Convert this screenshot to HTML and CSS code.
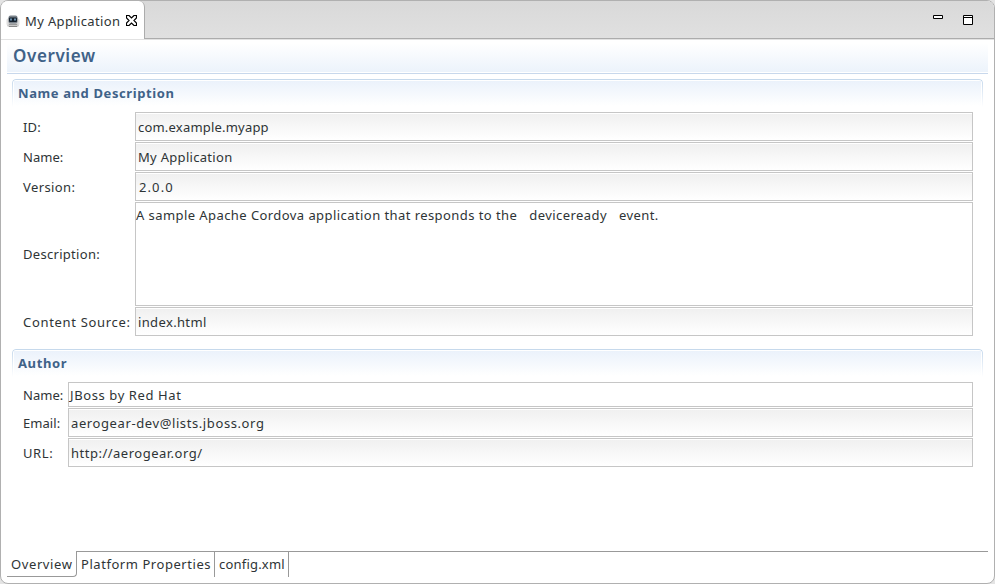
FILE: index.html
```
<!DOCTYPE html>
<html lang="en">
<head>
<meta charset="utf-8">
<title>My Application</title>
<link rel="stylesheet" href="styles.css">
</head>
<body>
<div class="window">
  <header class="tabbar">
    <div class="tab">
      <svg class="robot" width="14" height="14" viewBox="0 0 14 14"><rect x="1" y="4" width="12" height="9" rx="2.500" fill="#c9c9c9"/><rect x="0.500" y="5" width="2" height="6" rx="1" fill="#ddd"/><rect x="11.500" y="5" width="2" height="6" rx="1" fill="#ddd"/><rect x="2.500" y="1.500" width="9" height="8" rx="2" fill="#7b838b"/><rect x="3" y="3.500" width="8" height="4.500" rx="1" fill="#16222f"/><rect x="4" y="4.500" width="2" height="2" fill="#6c90ad"/><rect x="8" y="4.500" width="2" height="2" fill="#6c90ad"/><path d="M3 10.500h8" stroke="#999"/><path d="M3 12.500h8" stroke="#888"/></svg>
      <span class="tab-name s38">My Application</span>
      <svg class="close" width="11" height="11" viewBox="0 0 11 11"><path d="M.5.5h2.500l2.500 2.500L8 .5h2.500V3L8 5.500 10.500 8v2.500H8L5.500 8 3 10.500H.5V8L3 5.500.5 3z" fill="#fff" stroke="#000" stroke-width="1.200"/></svg>
    </div>
    <div class="tools">
      <svg width="10" height="4" viewBox="0 0 10 4"><path d="M.5.5h9v3h-9z" fill="#fff" stroke="#000"/></svg>
      <svg width="10" height="10" viewBox="0 0 10 10"><path d="M.5.5h9v9h-9zM1 2.500h8" fill="#fff" stroke="#000"/></svg>
    </div>
  </header>
  <main class="form">
    <h1><span>Overview</span></h1>
    <section class="section details">
      <h2 class="s60">Name and Description</h2>
      <div class="fields">
        <label class="s22">ID:</label><div class="field s22">com.example.myapp</div>
        <label class="s0">Name:</label><div class="field s30">My Application</div>
        <label class="s40">Version:</label><div class="field version">2.0.0</div>
        <label class="s30">Description:</label><div class="field area s43"><span>A sample Apache Cordova application that responds to the</span><span>deviceready</span><span>event.</span></div>
        <label class="s70">Content Source:</label><div class="field s38">index.html</div>
      </div>
    </section>
    <section class="section author">
      <h2 class="s60">Author</h2>
      <div class="fields">
        <label class="s0">Name:</label><div class="field plain s60">JBoss by Red Hat</div>
        <label class="s0">Email:</label><div class="field s60">aerogear-dev@lists.jboss.org</div>
        <label class="s60">URL:</label><div class="field s50">http://aerogear.org/</div>
      </div>
    </section>
  </main>
  <footer class="pages">
    <div class="page active s60">Overview</div>
    <div class="page platform s55">Platform Properties</div>
    <div class="page config s22">config.xml</div>
    <div class="rest"></div>
  </footer>
</div>
</body>
</html>
```
FILE: styles.css
```
* { box-sizing: border-box; }
body {
  margin: 0;
  background: #e4e4e4;
  font: 13px/18px "Noto Sans", "Open Sans", sans-serif;
  color: #2e3436;
  white-space: nowrap;
}
.window {
  width: 995px;
  height: 584px;
  border: 1px solid #b0b0b0;
  border-radius: 8px;
  background: #fff;
  overflow: hidden;
  display: flex;
  flex-direction: column;
}
.tabbar {
  flex: none;
  height: 39px;
  display: flex;
  justify-content: space-between;
  background: linear-gradient(#d9d9d9, #e0e0e0) 0 0 / 100% 37px no-repeat, linear-gradient(#acacac, #acacac) 0 37px / 100% 1px no-repeat, #e2e2e2;
}
.tab {
  width: 144px;
  height: 38px;
  display: flex;
  align-items: flex-start;
  padding: 11px 0 0 5px;
  background: #fff;
  border-right: 1px solid #acacac;
  border-radius: 0 6px 0 0;
}
.robot { margin-top: 2px; }
.tab-name { width: 96px; margin: 0 5px 0 5px; }
.close { margin-top: 3px; }
.tools { display: flex; gap: 20px; align-items: flex-start; padding: 14px 21px 0 0; }
.form { flex: none; height: 511px; padding: 3px 11px 0; }
h1 {
  margin: 0 -5px 5px;
  height: 31px;
  padding-left: 6px;
  font: 600 17px/26px "Noto Sans", sans-serif;
  letter-spacing: .6px;
  color: #406288;
  border-bottom: 1px solid #c8d8ec;
  background: linear-gradient(#fff, #ecf3fb) 0 0 / 100% 29px no-repeat;
}
.section {
  position: relative;
  background: linear-gradient(#ebf2fb, #fff) 2px 2px / calc(100% - 4px) 25px no-repeat;
}
.section::before {
  content: "";
  position: absolute;
  inset: 0 0 auto;
  height: 27px;
  border: 1px solid #c5d8ec;
  border-bottom: 0;
  border-radius: 4px 4px 0 0;
  -webkit-mask-image: linear-gradient(#000, transparent);
  mask-image: linear-gradient(#000, transparent);
}
.details { height: 270px; }
h2 { margin: 0; padding: 5px 0 0 6px; height: 33px; font-size: 13px; line-height: 18px; font-weight: 700; color: #406288; }
.fields { display: grid; gap: 1px 0; margin: 0 10px 0 11px; align-items: center; }
.details .fields { grid-template: 29px 29px 29px 104px 29px / 112px 1fr; }
.author .fields { grid-template: 25px 29px 29px / 45px 1fr; }
.field {
  height: 100%;
  padding: 1px 2px;
  line-height: 26px;
  border: 1px solid #c6c6c6;
  background: linear-gradient(#f0f0f0, #fff) 0 1px / 100% 26px no-repeat;
}
.version { padding-left: 3px; letter-spacing: 1.1px; }
.area { display: flex; gap: 12px; padding: 3px 0 0; line-height: 19px; background: #fff; }
.plain { padding: 0 1px; line-height: 24px; background: #fff; }
.pages { flex: none; display: flex; height: 26px; margin: 0 6px; line-height: 24px; }
.page { border: 0 solid #999; }
.active { width: 70px; padding: 1px 0 0 4px; border-width: 0 1px 1px 0; border-bottom-right-radius: 4px; }
.platform { width: 138px; padding-left: 4px; border-width: 1px 1px 0 0; }
.config { width: 74px; padding-left: 4px; border-width: 1px 1px 0 0; }
.rest { flex: 1; border-top: 1px solid #999; }
.s0 { letter-spacing: .05px; }
.s22 { letter-spacing: .2px; }
.s30 { letter-spacing: .3px; }
.s38 { letter-spacing: .36px; }
.s40 { letter-spacing: .4px; }
.s43 { letter-spacing: .43px; }
.s50 { letter-spacing: .5px; }
.s55 { letter-spacing: .55px; }
.s60 { letter-spacing: .6px; }
.s70 { letter-spacing: .68px; }
```
